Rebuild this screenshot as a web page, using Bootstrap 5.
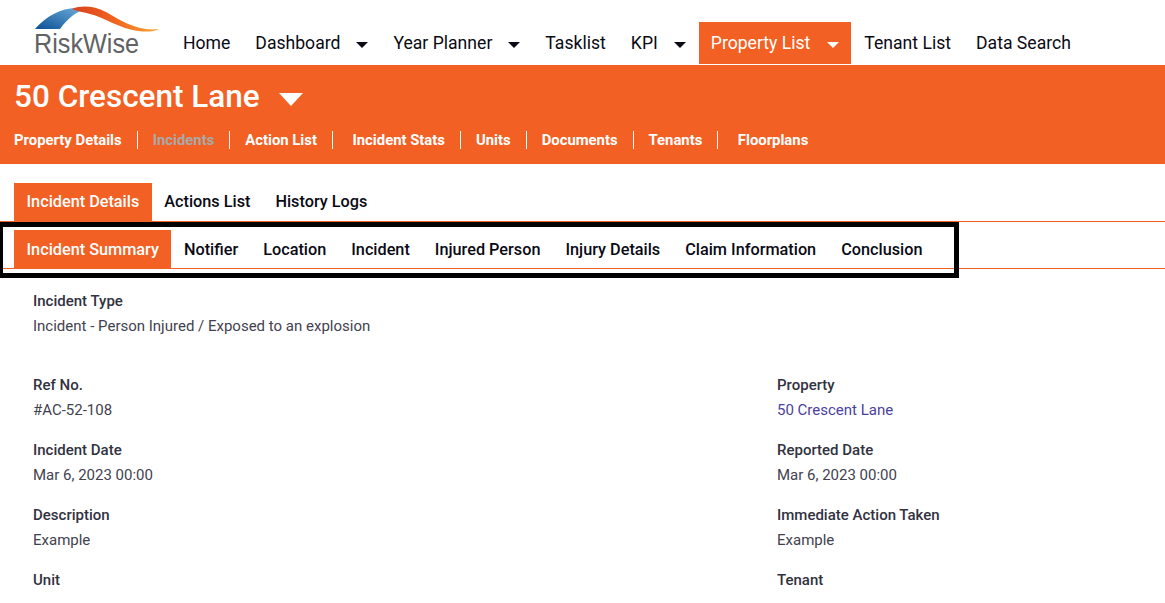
<!DOCTYPE html>
<html lang="en">
<head>
<meta charset="utf-8">
<title>RiskWise - Incident Summary</title>
<link rel="stylesheet" href="https://cdn.jsdelivr.net/npm/bootstrap@5.3.0/dist/css/bootstrap.min.css">
<style>
html,body{height:603px;overflow:hidden;background:#fff}
body{font-family:Roboto,"Liberation Sans",sans-serif;color:#32323f}
.rw-top{height:65px;padding-left:14px}
.rw-logo{display:block;width:150px;height:60px;margin-top:3px;flex:none}
.rw-logo text{font-family:"Liberation Sans",Arial,sans-serif;font-size:28px;fill:#616264}
.rw-main{margin-left:7px;gap:1px;height:42px;margin-top:22px;flex-wrap:nowrap}
.rw-main .nav-link{color:#0a0a14;font-size:17.6px;line-height:42px;padding:0 12px;display:flex;align-items:center;white-space:nowrap}
.rw-main .nav-link.rw-on{background:#f26023;color:#fff}
.rw-caret{display:inline-block;width:0;height:0;border-style:solid;border-width:6px 6px 0;border-color:#0a0a14 transparent transparent;margin-left:16px;margin-top:3px}
.rw-on .rw-caret{border-top-color:#fff;margin-left:17px}
.rw-band{background:#f26023;height:99px;padding:13px 0 0 14px}
.rw-title{font-size:31.5px;font-weight:500;line-height:38px;color:#fff;margin:0;display:flex;align-items:center}
.rw-title .rw-caret{border-width:13px 12px 0;border-top-color:#fff;margin-left:19px;margin-top:5px}
.rw-sub{margin-top:15px;flex-wrap:nowrap}
.rw-sub .nav-link{color:#fff;font-size:14.85px;font-weight:700;line-height:18px;padding:0 15px;border-right:1px solid #fff;white-space:nowrap}
.rw-sub .nav-item:first-child .nav-link{padding-left:0}
.rw-sub .nav-item:last-child .nav-link{border-right:0}
.rw-sub .nav-link.rw-dim{color:#a9a9a9}
.rw-wide{padding-left:19.5px!important}
.rw-tabs{flex-wrap:nowrap;padding-left:14px;border-bottom:1px solid #f26023}
.rw-tabs .nav-link{color:#0a0a14;font-size:16.25px;font-weight:500;line-height:38px;height:38px;padding:0 12.5px;border-radius:0;white-space:nowrap}
.rw-tabs .nav-link.rw-act{background:#f26023;color:#fff}
.rw-tabs-one{margin-top:19px}
.rw-tabs-two .nav-link{line-height:39px}
.rw-wrap{position:relative;padding-top:8px}
.rw-frame{position:absolute;left:-2px;top:0;width:961px;height:56px;border:5px solid #000;pointer-events:none}
.rw-body{padding:0 40px 0 33px;margin-top:22px}
.rw-k{font-size:15px;font-weight:500;line-height:20px;color:#32323f;margin:0 0 5px}
.rw-v{font-size:15px;line-height:20px;color:#42424f;margin:0 0 20px}
.rw-v a{color:#4a3f9f;text-decoration:none}
.rw-gap{margin-bottom:39px}
</style>
</head>
<body>
<header class="rw-top d-flex align-items-start">
  <svg class="rw-logo" viewBox="0 0 150 60" role="img" aria-label="RiskWise">
    <defs>
      <linearGradient id="g1" x1="0" y1="1" x2="1" y2="0">
        <stop offset="0" stop-color="#0b4f94"/><stop offset="1" stop-color="#6fb0dc"/>
      </linearGradient>
      <linearGradient id="g2" x1="0" y1="0" x2="1" y2="0">
        <stop offset="0" stop-color="#d9401c"/><stop offset="0.5" stop-color="#f0651f"/><stop offset="1" stop-color="#f9a735"/>
      </linearGradient>
    </defs>
    <path d="M21 26 C31 14 47 5 62 5 C65 5 68 5.500 71 6.500 C62 9 54 15 46 26 Z" fill="url(#g1)"/>
    <path d="M58 6 C68 2 80 3 92 9 C106 17 124 29 145 26 C140 29 132 29 124 28 C106 26 90 14 76 11 C70 9.500 63 8 58 6 Z" fill="url(#g2)"/>
    <text x="20" y="50" textLength="105" lengthAdjust="spacingAndGlyphs">RiskWise</text>
  </svg>
  <ul class="nav rw-main">
    <li class="nav-item"><a class="nav-link" href="#">Home</a></li>
    <li class="nav-item"><a class="nav-link" href="#">Dashboard<span class="rw-caret"></span></a></li>
    <li class="nav-item"><a class="nav-link" href="#">Year Planner<span class="rw-caret"></span></a></li>
    <li class="nav-item"><a class="nav-link" href="#">Tasklist</a></li>
    <li class="nav-item"><a class="nav-link" href="#">KPI<span class="rw-caret"></span></a></li>
    <li class="nav-item"><a class="nav-link rw-on" href="#">Property List<span class="rw-caret"></span></a></li>
    <li class="nav-item"><a class="nav-link" href="#">Tenant List</a></li>
    <li class="nav-item"><a class="nav-link" href="#">Data Search</a></li>
  </ul>
</header>
<section class="rw-band">
  <h1 class="rw-title">50 Crescent Lane<span class="rw-caret"></span></h1>
  <ul class="nav rw-sub">
    <li class="nav-item"><a class="nav-link" href="#">Property Details</a></li>
    <li class="nav-item"><a class="nav-link rw-dim" href="#">Incidents</a></li>
    <li class="nav-item"><a class="nav-link" href="#">Action List</a></li>
    <li class="nav-item"><a class="nav-link rw-wide" href="#">Incident Stats</a></li>
    <li class="nav-item"><a class="nav-link" href="#">Units</a></li>
    <li class="nav-item"><a class="nav-link" href="#">Documents</a></li>
    <li class="nav-item"><a class="nav-link" href="#">Tenants</a></li>
    <li class="nav-item"><a class="nav-link rw-wide" href="#">Floorplans</a></li>
  </ul>
</section>
<ul class="nav rw-tabs rw-tabs-one">
  <li class="nav-item"><a class="nav-link rw-act" href="#">Incident Details</a></li>
  <li class="nav-item"><a class="nav-link" href="#">Actions List</a></li>
  <li class="nav-item"><a class="nav-link" href="#">History Logs</a></li>
</ul>
<div class="rw-wrap">
  <ul class="nav rw-tabs rw-tabs-two">
    <li class="nav-item"><a class="nav-link rw-act" href="#">Incident Summary</a></li>
    <li class="nav-item"><a class="nav-link" href="#">Notifier</a></li>
    <li class="nav-item"><a class="nav-link" href="#">Location</a></li>
    <li class="nav-item"><a class="nav-link" href="#">Incident</a></li>
    <li class="nav-item"><a class="nav-link" href="#">Injured Person</a></li>
    <li class="nav-item"><a class="nav-link" href="#">Injury Details</a></li>
    <li class="nav-item"><a class="nav-link" href="#">Claim Information</a></li>
    <li class="nav-item"><a class="nav-link" href="#">Conclusion</a></li>
  </ul>
  <div class="rw-frame"></div>
</div>
<main class="rw-body">
  <p class="rw-k">Incident Type</p>
  <p class="rw-v rw-gap">Incident - Person Injured / Exposed to an explosion</p>
  <div class="row">
    <div class="col-8">
      <p class="rw-k">Ref No.</p><p class="rw-v">#AC-52-108</p>
      <p class="rw-k">Incident Date</p><p class="rw-v">Mar 6, 2023 00:00</p>
      <p class="rw-k">Description</p><p class="rw-v">Example</p>
      <p class="rw-k">Unit</p>
    </div>
    <div class="col-4">
      <p class="rw-k">Property</p><p class="rw-v"><a href="#">50 Crescent Lane</a></p>
      <p class="rw-k">Reported Date</p><p class="rw-v">Mar 6, 2023 00:00</p>
      <p class="rw-k">Immediate Action Taken</p><p class="rw-v">Example</p>
      <p class="rw-k">Tenant</p>
    </div>
  </div>
</main>
<script src="https://cdn.jsdelivr.net/npm/bootstrap@5.3.0/dist/js/bootstrap.bundle.min.js"></script>
</body>
</html>
